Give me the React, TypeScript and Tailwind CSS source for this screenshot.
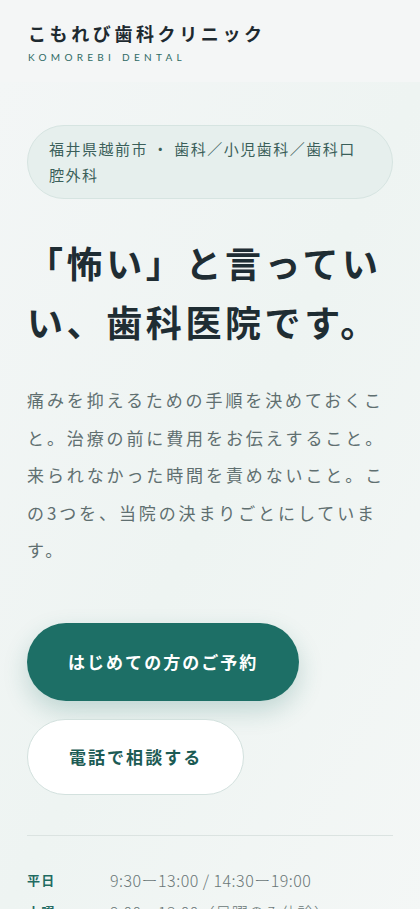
import React from "react";

const hours = [
  { label: "平日", time: "9:30ー13:00 / 14:30ー19:00" },
  { label: "土曜", time: "9:00ー13:00（日曜のみ休診）" },
];

export default function App() {
  return (
    <div
      className="min-h-screen w-full overflow-hidden bg-[#f4f6f6] text-[#1f2d33]"
      style={{ fontFamily: '"Noto Sans CJK JP", "Noto Sans", sans-serif' }}
    >
      {/* Header */}
      <header className="px-7 pt-[19px] pb-[18px]">
        <div className="text-[18px] font-bold leading-[28px] tracking-[0.2em] text-[#1e2a30]">
          こもれび歯科クリニック
        </div>
        <div
          className="mt-[3px] text-[10px] leading-[14px] tracking-[0.43em] text-[#2e6b64]"
          style={{ fontFamily: "Lato, sans-serif" }}
        >
          KOMOREBI DENTAL
        </div>
      </header>

      {/* Hero */}
      <section className="bg-gradient-to-br from-[#f3f6f6] via-[#eef4f2] to-[#f4f7f6] px-[27px] pt-[43px]">
        <div className="rounded-full border border-[#d6e4e1] bg-[#e6efed] px-[21px] py-[10px] text-[15px] leading-[26px] tracking-[0.1em] text-[#3b5f5a]">
          福井県越前市 ・ 歯科／小児歯科／歯科口腔外科
        </div>

        <h1 className="mt-[34px] text-[36px] font-bold leading-[59px] tracking-[0.1em] text-[#1f2d33]">
          「怖い」と言っていい、歯科医院です。
        </h1>

        <p className="mt-[30px] text-[17px] leading-[37.5px] tracking-[0.17em] text-[#5f6f70]">
          痛みを抑えるための手順を決めておくこと。治療の前に費用をお伝えすること。来られなかった時間を責めないこと。この3つを、当院の決まりごとにしています。
        </p>

        <div className="mt-[54px] flex flex-col items-start gap-[18px]">
          <button className="h-[78px] rounded-full bg-[#1d6f66] px-[41px] text-[17px] font-bold tracking-[0.12em] text-white shadow-[0_10px_24px_rgba(29,111,102,0.22)]">
            はじめての方のご予約
          </button>
          <button className="h-[76px] rounded-full border border-[#d3e1de] bg-white px-[41px] text-[17px] font-bold tracking-[0.12em] text-[#1c5b54]">
            電話で相談する
          </button>
        </div>

        <div className="mt-[40px] border-t border-[#dbe3e1] pt-[32px]">
          <div className="flex flex-col gap-[8px]">
            {hours.map((h) => (
              <div key={h.label} className="flex items-center leading-[24px]">
                <span className="w-[83px] text-[13px] font-bold tracking-[0.1em] text-[#1f6b62]">
                  {h.label}
                </span>
                <span className="text-[16px] font-light tracking-[0.03em] text-[#6a7777]">
                  {h.time}
                </span>
              </div>
            ))}
          </div>
        </div>
      </section>
    </div>
  );
}
